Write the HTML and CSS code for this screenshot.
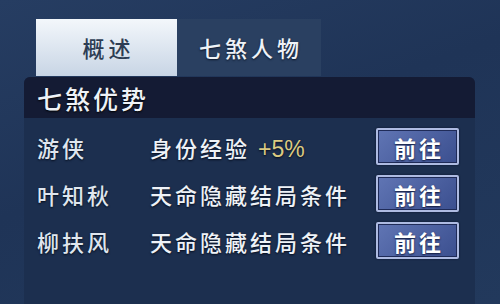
FILE: index.html
```html
<!DOCTYPE html>
<html lang="zh">

<head>
    <meta charset="UTF-8">
    <meta name="viewport" content="width=device-width, initial-scale=1.0">
    <title>七煞</title>
    <link rel="stylesheet" href="styles.css">
</head>

<body>
    <div class="screen">
        <div class="tabs">
            <div class="tab active">概述</div>
            <div class="tab">七煞人物</div>
        </div>
        <div class="panel">
            <div class="panel-head">七煞优势</div>
            <div class="rows">
                <div class="row">
                    <div class="name">游侠</div>
                    <div class="desc">身份经验 <span class="bonus">+5%</span></div>
                    <button class="go">前往</button>
                </div>
                <div class="row">
                    <div class="name">叶知秋</div>
                    <div class="desc">天命隐藏结局条件</div>
                    <button class="go">前往</button>
                </div>
                <div class="row">
                    <div class="name">柳扶风</div>
                    <div class="desc">天命隐藏结局条件</div>
                    <button class="go">前往</button>
                </div>
            </div>
        </div>
    </div>
</body>

</html>
```

FILE: styles.css
```css
* {
    box-sizing: border-box;
    font-family: "Noto Sans CJK SC", "Noto Sans", sans-serif;
}

body {
    margin: 0;
    background: #20365a;
}

.screen {
    width: 500px;
    height: 304px;
    padding: 19px 25px 0 24px;
    display: flex;
    flex-direction: column;
    overflow: hidden;
    background: linear-gradient(160deg, #263d62 0%, #1f3457 45%, #22395c 100%);
    color: #eef2f7;
}

.tabs {
    display: flex;
    height: 57px;
    margin-left: 12px;
}

.tab {
    width: 144px;
    display: flex;
    justify-content: center;
    align-items: center;
    font-size: 22px;
    font-weight: 500;
    letter-spacing: 4px;
    padding-left: 4px;
    padding-bottom: 2px;
    background-color: #2a4061;
    text-shadow: 0 1px 2px #0a1428;
}

.tab.active {
    width: 141px;
    background: linear-gradient(#f3f7fb, #c8d5e5);
    color: #2d3d54;
    text-shadow: none;
}

.panel {
    flex: 1;
    margin-top: 1px;
    border-radius: 6px 6px 0 0;
    background-color: #1c2f4f;
    overflow: hidden;
}

.panel-head {
    height: 41px;
    display: flex;
    align-items: center;
    padding-left: 13px;
    font-size: 25px;
    font-weight: 500;
    letter-spacing: 3px;
    background-color: #141b34;
    text-shadow: 0 1px 2px #000000;
}

.rows {
    padding: 5px 16px 0 13px;
}

.row {
    display: grid;
    grid-template-columns: 113px 1fr 83px;
    height: 47px;
    align-items: center;
    font-size: 22px;
    font-weight: 500;
    letter-spacing: 3px;
    text-shadow: 0 1px 2px #050c1c;
}

.name {
    color: #dfe6ee;
}

.bonus {
    color: #dccb82;
    font-family: "Liberation Sans", sans-serif;
    font-size: 23px;
    font-weight: normal;
    letter-spacing: 0;
}

.go {
    height: 37px;
    width: 83px;
    padding: 0 0 0 3px;
    border: 2px solid #aebbe2;
    border-radius: 2px;
    box-shadow: inset 0 0 0 1px #1f2b58, 0 0 2px #0b1226;
    background: linear-gradient(135deg, #6075b4, #3b4f8f);
    color: #ffffff;
    font-size: 22px;
    font-weight: bold;
    letter-spacing: 3px;
    text-shadow: 0 1px 2px #0d1638;
    cursor: pointer;
}
```
